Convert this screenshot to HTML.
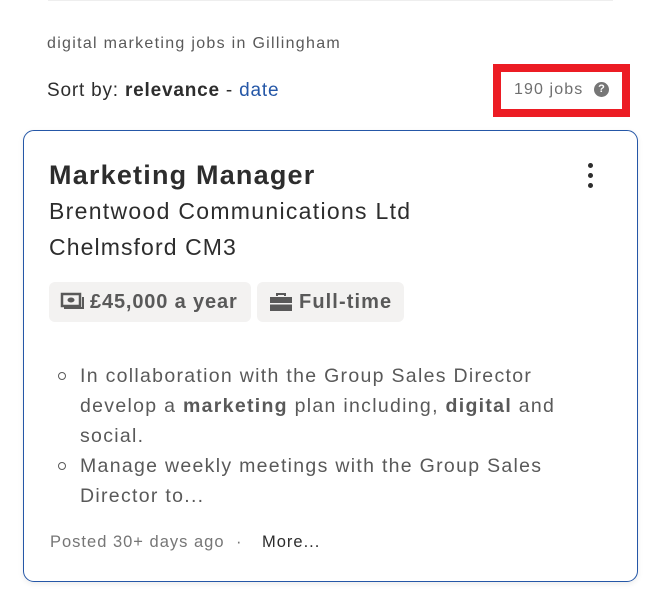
<!DOCTYPE html>
<html><head><meta charset="utf-8"><style>
*{margin:0;padding:0;box-sizing:border-box}
body{width:661px;height:591px;background:#fff;font-family:"Liberation Sans",sans-serif;position:relative;overflow:hidden;color:#2d2d2d}
.a{position:absolute;white-space:nowrap}
</style></head><body>
<div class="a" style="left:48px;top:0;width:565px;height:1px;background:#eee"></div>
<div class="a" style="left:47px;top:35px;font-size:16px;letter-spacing:1.3px;color:#595959">digital marketing jobs in Gillingham</div>
<div class="a" style="left:47px;top:80px;font-size:19px;letter-spacing:0.8px;color:#2d2d2d">Sort by: <b>relevance</b> - <span style="color:#2557a7">date</span></div>
<div class="a" style="left:493px;top:64px;width:137px;height:53px;border:8px solid #ec1c24"></div>
<div class="a" style="left:514px;top:81px;font-size:16px;letter-spacing:1.1px;color:#6f6f6f">190 jobs</div>
<div class="a" style="left:594px;top:82px;width:15px;height:15px;border-radius:50%;background:#767676;color:#fff;font-size:11px;font-weight:bold;text-align:center;line-height:15px">?</div>
<div class="a" style="left:23px;top:130px;width:615px;height:452px;border:1px solid #2557a7;border-radius:11px;box-shadow:0 2px 6px rgba(0,0,0,.08)"></div>
<div class="a" style="left:588px;top:163px;width:5px;height:5px;border-radius:50%;background:#2d2d2d;box-shadow:0 10px 0 #2d2d2d,0 20px 0 #2d2d2d"></div>
<div class="a" style="left:49px;top:160px;font-size:27px;letter-spacing:1.2px;font-weight:bold;color:#2d2d2d">Marketing Manager</div>
<div class="a" style="left:49px;top:198px;font-size:23px;letter-spacing:1.3px;color:#2d2d2d">Brentwood Communications Ltd</div>
<div class="a" style="left:49px;top:234px;font-size:23px;letter-spacing:1.1px;color:#2d2d2d">Chelmsford CM3</div>
<div class="a" style="left:49px;top:282px;width:202px;height:40px;background:#f3f2f1;border-radius:6px"></div>
<svg class="a" style="left:60px;top:292px" width="26" height="20" viewBox="0 0 26 20"><rect x="2" y="2" width="18" height="12" fill="none" stroke="#595959" stroke-width="2.5"/><ellipse cx="11" cy="8" rx="3.5" ry="2.5" fill="#595959"/><path d="M23 5v11H4" stroke="#595959" stroke-width="2" fill="none"/></svg>
<div class="a" style="left:90px;top:291px;font-size:20px;letter-spacing:0.85px;font-weight:bold;color:#595959">£45,000 a year</div>
<div class="a" style="left:257px;top:282px;width:147px;height:40px;background:#f3f2f1;border-radius:6px"></div>
<svg class="a" style="left:269px;top:292px" width="24" height="20" viewBox="0 0 24 20"><path d="M8 4V2h8v2" stroke="#595959" stroke-width="2" fill="none"/><rect x="1" y="5" width="22" height="14" fill="#595959"/><rect x="1" y="11" width="22" height="1.5" fill="#f3f2f1"/></svg>
<div class="a" style="left:299px;top:291px;font-size:20px;letter-spacing:1.1px;font-weight:bold;color:#595959">Full-time</div>
<div class="a" style="left:58px;top:372px;width:8px;height:8px;border:1.3px solid #595959;border-radius:50%"></div>
<div class="a" style="left:58px;top:462px;width:8px;height:8px;border:1.3px solid #595959;border-radius:50%"></div>
<div class="a" style="left:80px;top:361px;font-size:19.5px;letter-spacing:1.3px;line-height:30px;color:#595959">In collaboration with the Group Sales Director<br>develop a <b>marketing</b> plan including, <b>digital</b> and<br>social.<br>Manage weekly meetings with the Group Sales<br>Director to...</div>
<div class="a" style="left:50px;top:533px;font-size:16.5px;letter-spacing:1px;color:#767676">Posted 30+ days ago</div>
<div class="a" style="left:236px;top:533px;font-size:16.5px;color:#767676">·</div>
<div class="a" style="left:262px;top:533px;font-size:16.5px;letter-spacing:1px;color:#2d2d2d">More...</div>
</body></html>
